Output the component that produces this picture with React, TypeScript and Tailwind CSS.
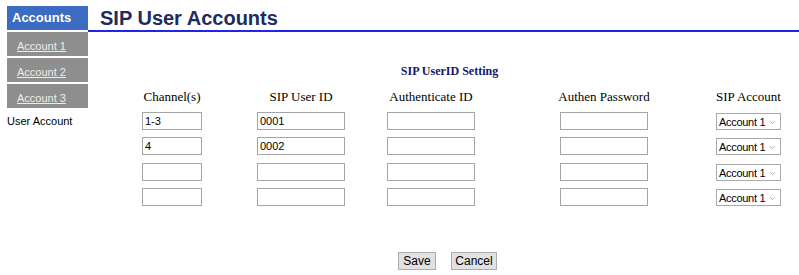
import { ChevronDown } from "lucide-react";

const rows = [
  { ch: "1-3", uid: "0001", gap: "" },
  { ch: "4", uid: "0002", gap: "mt-[7px]" },
  { ch: "", uid: "", gap: "mt-[8px]" },
  { ch: "", uid: "", gap: "mt-[7px]" },
];

const sans = { fontFamily: '"Liberation Sans", Arial, sans-serif' };
const serif = { fontFamily: '"Liberation Serif", "Times New Roman", serif' };

function TextBox({ value, width }: { value: string; width: string }) {
  return (
    <input
      type="text"
      defaultValue={value}
      style={sans}
      className={`${width} h-[18px] border border-[#a5a5a5] bg-white px-[2px] text-[11px] text-black outline-none`}
    />
  );
}

function AccountSelect() {
  return (
    <div className="relative w-[65px] h-[17px] border border-[#a9a9a9] bg-white">
      <span style={sans} className="absolute left-[2px] top-[1px] text-[11px] leading-[14px] tracking-[-0.3px] text-black">
        Account 1
      </span>
      <ChevronDown className="absolute right-[3px] top-[4px] text-[#707070]" size={9} strokeWidth={1.5} />
    </div>
  );
}

export default function App() {
  return (
    <div className="flex w-[799px] h-[275px] bg-white">
      {/* side menu */}
      <div className="w-[88px] shrink-0 pl-[7px] pt-[6px]">
        <div style={sans} className="h-[24px] w-[81px] bg-[#3b6cc1] pl-[5px] text-[13px] font-bold leading-[24px] text-white">
          Accounts
        </div>
        {["Account 1", "Account 2", "Account 3"].map((a) => (
          <div key={a} className="mt-[2px] h-[24px] w-[81px] bg-[#8e8e8e] pl-[10px]">
            <a href="#" style={sans} className="text-[11px] leading-[24px] text-[#ececec] underline">
              {a}
            </a>
          </div>
        ))}
        <div style={sans} className="mt-[6px] text-[11px] leading-[14px] text-black">
          User Account
        </div>
      </div>

      {/* main */}
      <div className="flex-1">
        <div className="h-[32px] border-b-2 border-[#2323f0] pl-[12px] pt-[6px]">
          <h1 style={sans} className="text-[20px] font-bold leading-[24px] text-[#1c2c5e]">
            SIP User Accounts
          </h1>
        </div>

        <div style={serif} className="mt-[31px] pl-[12px] text-center text-[12px] font-bold leading-[16px] text-[#16166b]">
          SIP UserID Setting
        </div>

        <div style={serif} className="mt-[9px] pl-[24px]">
          <div className="grid grid-cols-[120px_138px_122px_224px_65px] text-center text-[13px] leading-[18px] text-black">
            <div>Channel(s)</div>
            <div>SIP User ID</div>
            <div>Authenticate ID</div>
            <div>Authen Password</div>
            <div>SIP Account</div>
          </div>
          <div className="mt-[6px]">
            {rows.map((r, i) => (
              <div key={i} className={`${r.gap} grid grid-cols-[120px_138px_122px_224px_65px] items-center justify-items-center`}>
                <TextBox value={r.ch} width="w-[60px]" />
                <TextBox value={r.uid} width="w-[88px]" />
                <TextBox value="" width="w-[88px]" />
                <TextBox value="" width="w-[88px]" />
                <AccountSelect />
              </div>
            ))}
          </div>
        </div>

        <div className="mt-[46px] flex justify-center gap-[15px] pl-[8px]">
          <button style={sans} className="h-[18px] w-[38px] border border-[#adadad] bg-[#e1e1e1] text-[12px] leading-[16px] text-black">
            Save
          </button>
          <button style={sans} className="h-[18px] w-[46px] border border-[#adadad] bg-[#e1e1e1] text-[12px] leading-[16px] text-black">
            Cancel
          </button>
        </div>
      </div>
    </div>
  );
}
